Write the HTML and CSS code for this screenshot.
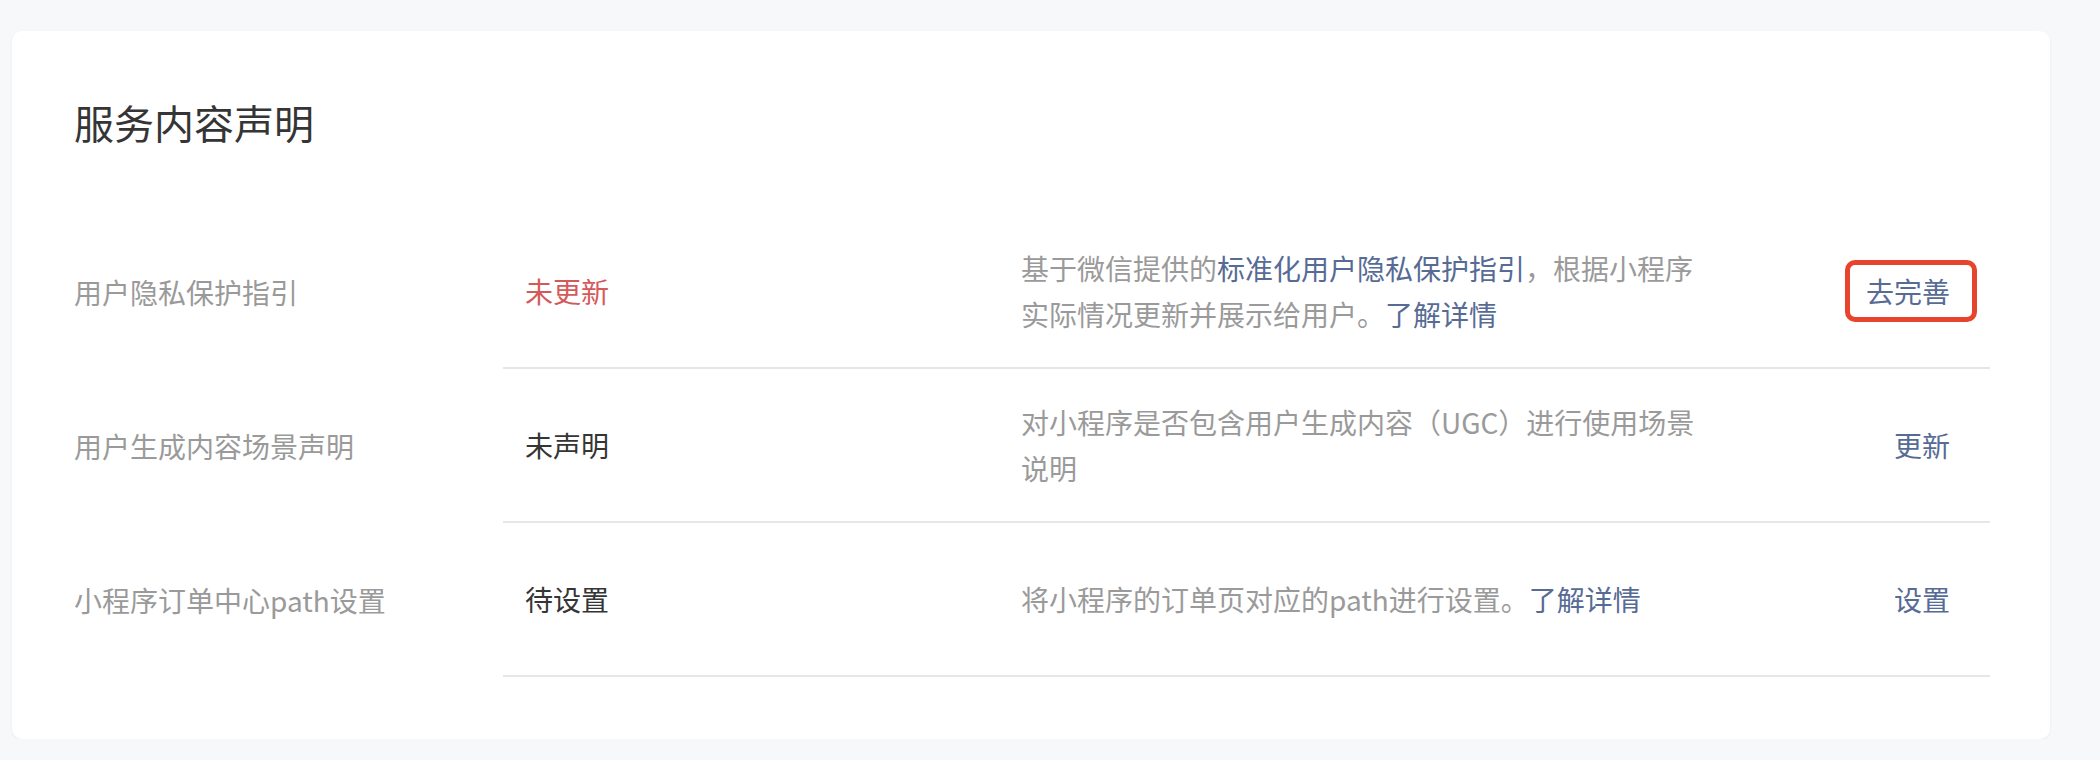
FILE: index.html
```html
<!DOCTYPE html>
<html lang="zh-CN">
<head>
  <meta charset="UTF-8">
  <title>服务内容声明</title>
  <link rel="stylesheet" href="styles.css">
</head>
<body>
  <div class="card">
    <h2 class="card-title">服务内容声明</h2>

    <div class="row">
      <div class="row-label">用户隐私保护指引</div>
      <div class="row-body">
        <div class="status status-red">未更新</div>
        <div class="desc">基于微信提供的<a href="#">标准化用户隐私保护指引</a>，根据小程序实际情况更新并展示给用户。<a href="#">了解详情</a></div>
        <div class="action"><a href="#" class="marked">去完善</a></div>
      </div>
    </div>

    <div class="row">
      <div class="row-label">用户生成内容场景声明</div>
      <div class="row-body">
        <div class="status">未声明</div>
        <div class="desc">对小程序是否包含用户生成内容（UGC）进行使用场景说明</div>
        <div class="action"><a href="#">更新</a></div>
      </div>
    </div>

    <div class="row">
      <div class="row-label">小程序订单中心path设置</div>
      <div class="row-body">
        <div class="status">待设置</div>
        <div class="desc">将小程序的订单页对应的path进行设置。<a href="#">了解详情</a></div>
        <div class="action"><a href="#">设置</a></div>
      </div>
    </div>
  </div>
</body>
</html>
```

FILE: styles.css
```css
body {
  margin: 0;
  padding: 31px 50px 0 12px;
  background: #f7f8fa;
  font-family: "Noto Sans CJK SC", "Noto Sans", sans-serif;
  color: #353535;
}
a {
  color: #576b95;
  text-decoration: none;
}
.card {
  background: #fff;
  border-radius: 10px;
  box-shadow: 0 1px 3px rgba(0, 0, 0, 0.06);
  padding: 63px 60px 62px 62px;
}
.card-title {
  margin: 0 0 65px;
  font-size: 40px;
  font-weight: normal;
  line-height: 56px;
  color: #353535;
}
.row {
  display: flex;
  font-size: 28px;
  line-height: 46px;
}
.row-label {
  width: 429px;
  flex-shrink: 0;
  display: flex;
  align-items: center;
  color: #9a9a9a;
}
.row-body {
  flex: 1;
  display: flex;
  align-items: center;
  height: 152px;
  border-bottom: 2px solid #e6e6ea;
}
.status {
  width: 496px;
  padding-left: 22px;
  flex-shrink: 0;
  color: #353535;
}
.status-red {
  color: #d45a5a;
}
.desc {
  width: 700px;
  flex-shrink: 0;
  color: #9a9a9a;
}
.action {
  flex: 1;
  text-align: right;
  padding-right: 40px;
}
.action a {
  position: relative;
  display: inline-block;
}
.marked::after {
  content: "";
  position: absolute;
  left: -21px;
  right: -27px;
  top: -8px;
  bottom: -8px;
  border: 5px solid #e8432d;
  border-radius: 10px;
}
```
